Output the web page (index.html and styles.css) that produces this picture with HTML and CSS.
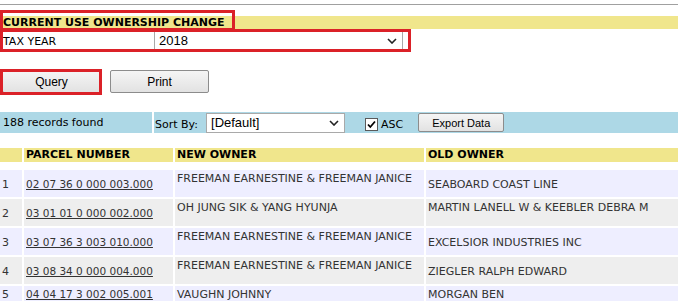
FILE: index.html
```html
<!DOCTYPE html>
<html lang="en">
<head>
    <meta charset="UTF-8">
    <meta name="viewport" content="width=device-width, initial-scale=1.0">
    <title>Current Use Ownership Change</title>
    <link rel="stylesheet" href="styles.css">
</head>
<body>

    <div class="page">
        <div class="top-rule"></div>
        <h2 class="section-title">CURRENT USE OWNERSHIP CHANGE</h2>

        <div class="filter-row">
            <label for="tax-year">TAX YEAR</label>
            <div class="select-wrap select-year">
                <select id="tax-year">
                    <option>2018</option>
                </select>
                <svg class="chevron" width="10" height="6" viewBox="0 0 10 6"><path d="M1 1 L5 5 L9 1" /></svg>
            </div>
        </div>

        <div class="actions">
            <button type="button" class="btn btn-wide">Query</button>
            <button type="button" class="btn btn-wide">Print</button>
        </div>

        <div class="toolbar">
            <div class="toolbar-count">188 records found</div>
            <div class="toolbar-sort">
                <span class="sort-label">Sort By:</span>
                <div class="select-wrap select-sort">
                    <select>
                        <option>[Default]</option>
                    </select>
                    <svg class="chevron" width="10" height="6" viewBox="0 0 10 6"><path d="M1 1 L5 5 L9 1" /></svg>
                </div>
                <label class="asc">
                    <span class="checkbox">
                        <input type="checkbox" checked>
                        <svg width="13" height="13" viewBox="0 0 13 13"><path d="M3 6.5 L5.3 9 L10 3.5" /></svg>
                    </span>
                    ASC
                </label>
                <button type="button" class="btn btn-export">Export Data</button>
            </div>
        </div>

        <table class="results">
            <thead>
                <tr>
                    <th class="col-num"></th>
                    <th class="col-parcel">PARCEL NUMBER</th>
                    <th class="col-new">NEW OWNER</th>
                    <th>OLD OWNER</th>
                </tr>
            </thead>
            <tbody>
                <tr class="spacer"><td colspan="4"></td></tr>
                <tr class="row-odd tall">
                    <td>1</td>
                    <td><a href="#">02 07 36 0 000 003.000</a></td>
                    <td class="top">FREEMAN EARNESTINE &amp; FREEMAN JANICE</td>
                    <td>SEABOARD COAST LINE</td>
                </tr>
                <tr class="row-even tall">
                    <td>2</td>
                    <td><a href="#">03 01 01 0 000 002.000</a></td>
                    <td class="top">OH JUNG SIK &amp; YANG HYUNJA</td>
                    <td class="top">MARTIN LANELL W &amp; KEEBLER DEBRA M</td>
                </tr>
                <tr class="row-odd tall">
                    <td>3</td>
                    <td><a href="#">03 07 36 3 003 010.000</a></td>
                    <td class="top">FREEMAN EARNESTINE &amp; FREEMAN JANICE</td>
                    <td>EXCELSIOR INDUSTRIES INC</td>
                </tr>
                <tr class="row-even tall">
                    <td>4</td>
                    <td><a href="#">03 08 34 0 000 004.000</a></td>
                    <td class="top">FREEMAN EARNESTINE &amp; FREEMAN JANICE</td>
                    <td>ZIEGLER RALPH EDWARD</td>
                </tr>
                <tr class="row-odd">
                    <td>5</td>
                    <td><a href="#">04 04 17 3 002 005.001</a></td>
                    <td>VAUGHN JOHNNY</td>
                    <td>MORGAN BEN</td>
                </tr>
            </tbody>
        </table>

        <!-- red highlight boxes drawn over the page -->
        <div class="mark mark-title"></div>
        <div class="mark mark-year"></div>
        <div class="mark mark-query"></div>
    </div>

</body>
</html>
```

FILE: styles.css
```css
/* Basic page styling */
body {
    font-family: "DejaVu Sans", Verdana, sans-serif;
    font-size: 11px;
    color: #000;
    background-color: #fff;
    margin: 0;
}

.page {
    position: relative;
    height: 304px;
    overflow: hidden;
}

.top-rule {
    margin-top: 4px;
    border-top: 1px solid #a0a0a0;
}

.section-title {
    margin: 11px 0 0;
    padding-left: 3px;
    height: 13px;
    line-height: 13px;
    font-size: 11px;
    font-weight: bold;
    background-color: #f0e68c;
}

/* Tax year filter */
.filter-row {
    display: flex;
    align-items: center;
    margin-top: 2px;
    height: 19px;
}

.filter-row label {
    width: 154px;
    padding: 2px 0 0 3px;
    box-sizing: border-box;
}

.select-wrap {
    position: relative;
    display: flex;
}

.select-wrap select {
    appearance: none;
    -webkit-appearance: none;
    width: 100%;
    margin: 0;
    padding: 0 0 0 4px;
    border: 1px solid #a9a9a9;
    border-radius: 0;
    background-color: #fff;
    color: #000;
    font-family: "Liberation Sans", Arial, sans-serif;
    font-size: 13px;
}

.select-wrap .chevron {
    position: absolute;
    top: 50%;
    right: 6px;
    margin-top: -3px;
}

.chevron path {
    fill: none;
    stroke: #222;
    stroke-width: 1.6;
}

.select-year {
    width: 249px;
    height: 19px;
}

.select-sort {
    width: 139px;
    height: 20px;
    margin-left: 8px;
}

/* Buttons */
.actions {
    display: flex;
    gap: 9px;
    margin-top: 20px;
    padding-left: 2px;
}

.btn {
    height: 23px;
    padding: 0;
    border: 1px solid #8c8c8c;
    border-radius: 2px;
    background: linear-gradient(#f5f5f5, #e2e2e2);
    color: #000;
    font-family: "Liberation Sans", Arial, sans-serif;
    font-size: 11px;
    cursor: pointer;
}

.btn-wide {
    width: 99px;
    font-size: 12px;
}

.btn-export {
    width: 86px;
    height: 19px;
    margin-left: 15px;
}

/* Records toolbar */
.toolbar {
    display: flex;
    gap: 2px;
    margin-top: 19px;
    height: 21px;
}

.toolbar-count,
.toolbar-sort {
    display: flex;
    align-items: center;
    background-color: #add8e6;
}

.toolbar-count {
    width: 152px;
    padding-left: 3px;
    box-sizing: border-box;
}

.toolbar-sort {
    flex: 1;
    padding-left: 1px;
}

.sort-label {
    padding-top: 3px;
}

.asc {
    display: flex;
    align-items: center;
    gap: 3px;
    margin-left: 20px;
    padding-top: 3px;
}

.checkbox {
    position: relative;
    width: 13px;
    height: 13px;
}

.checkbox input {
    appearance: none;
    -webkit-appearance: none;
    width: 13px;
    height: 13px;
    margin: 0;
    border: 1px solid #5a5a5a;
    background-color: #fff;
}

.checkbox svg {
    position: absolute;
    top: 0;
    left: 0;
}

.checkbox path {
    fill: none;
    stroke: #000;
    stroke-width: 1.8;
}

/* Results table */
.results {
    width: calc(100% + 4px);
    margin: 13px 0 0 -2px;
    border-spacing: 2px;
    table-layout: fixed;
}

.results th,
.results td {
    box-sizing: border-box;
}

.results th {
    height: 14px;
    padding: 0 0 0 2px;
    line-height: 14px;
    text-align: left;
    font-weight: bold;
    background-color: #f0e68c;
}

.col-num {
    width: 22px;
}

.col-parcel {
    width: 149px;
}

.col-new {
    width: 249px;
}

.results td {
    padding: 1px 0 0 2px;
    line-height: 13px;
    color: #333;
    vertical-align: middle;
    white-space: nowrap;
}

.results td.top {
    vertical-align: top;
    padding-top: 2px;
}

.results a {
    color: #333;
    font-size: 10.5px;
}

.results .spacer td {
    height: 4px;
    padding: 0;
}

.row-odd td {
    height: 15px;
    background-color: #eeeeff;
}

.row-even td {
    background-color: #eeeeee;
}

.results .tall td {
    height: 27px;
}

/* Red highlight boxes */
.mark {
    position: absolute;
    border: 3px solid #db2128;
    box-sizing: border-box;
}

.mark-title {
    left: 0;
    top: 10px;
    width: 235px;
    height: 21px;
}

.mark-year {
    left: 0;
    top: 29px;
    width: 411px;
    height: 23px;
}

.mark-query {
    left: 0;
    top: 69px;
    width: 102px;
    height: 26px;
}
```
